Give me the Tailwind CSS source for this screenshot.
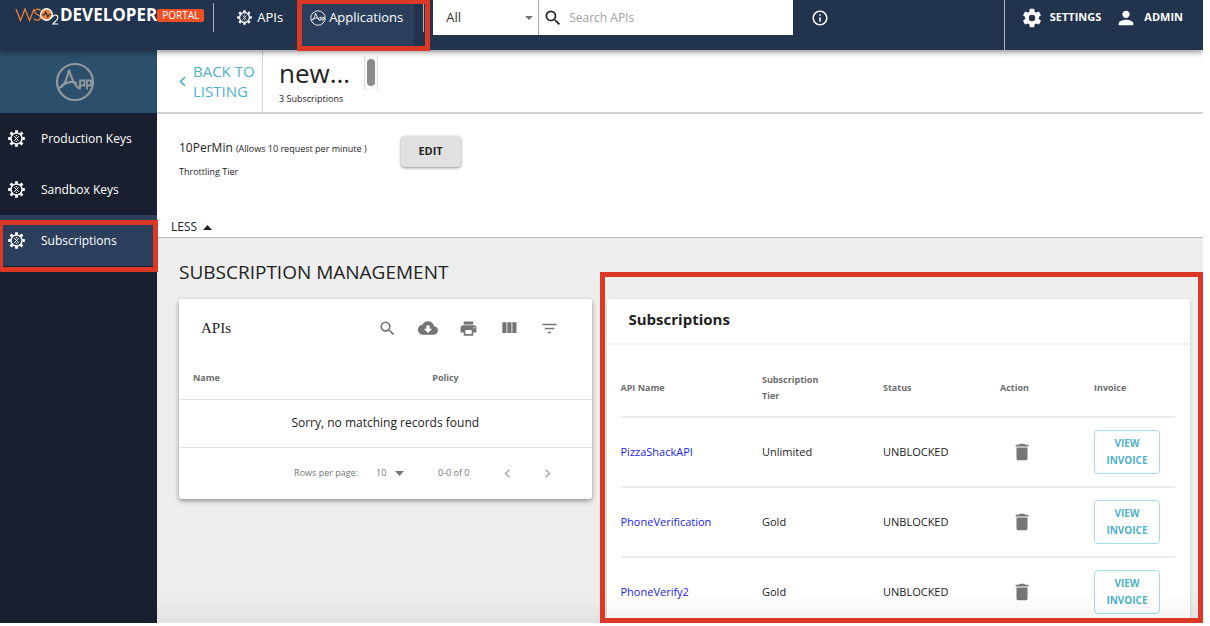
<!DOCTYPE html>
<html lang="en">
<head>
<meta charset="utf-8">
<title>WSO2 Developer Portal - Subscriptions</title>
<script src="https://cdn.jsdelivr.net/npm/@tailwindcss/browser@4"></script>
</head>
<body class="relative h-screen overflow-hidden bg-white pr-[7px] pb-[3px] font-['Open_Sans',sans-serif] text-[#222]">
<svg class="hidden" aria-hidden="true">
  <symbol id="gear" viewBox="0 0 24 24">
    <g fill="none" stroke="currentColor" stroke-width="2">
      <circle cx="12" cy="12" r="7.8"/>
      <path stroke-width="4" d="M12 .3v3.500M12 20.200v3.500M.3 12h3.500M20.200 12h3.500M3.600 3.600l2.500 2.500M17.900 17.900l2.500 2.500M3.600 20.400l2.500-2.500M17.900 6.100l2.500-2.500"/>
      <path stroke-width="1.400" d="M8.800 8.800l6.400 6.400M15.200 8.800l-6.400 6.400M11 8h2M11 16h2"/>
    </g>
  </symbol>
  <symbol id="app" viewBox="0 0 40 40">
    <g fill="none" stroke="currentColor" stroke-width="2.200">
      <circle cx="20" cy="20" r="18"/>
      <path d="M3 26Q10 26 14 8q4 14 10 18.500M6 24q8-5 12-4l4 1"/>
      <path stroke-width="1.800" d="M25 17.500v10M25 18.500h4.500v5H25M32 17.500v10M32 18.500h4v5h-4"/>
    </g>
  </symbol>
  <symbol id="search" viewBox="0 0 24 24"><path fill="currentColor" d="M15.500 14h-.79l-.28-.27A6.471 6.471 0 0 0 16 9.500 6.500 6.500 0 1 0 9.500 16c1.610 0 3.090-.59 4.230-1.570l.27.28v.79l5 4.990L20.490 19l-4.990-5zm-6 0C7.010 14 5 11.990 5 9.500S7.010 5 9.500 5 14 7.010 14 9.500 11.990 14 9.500 14z"/></symbol>
  <symbol id="trash" viewBox="0 0 24 24"><path fill="currentColor" d="M6 19c0 1.100.9 2 2 2h8c1.100 0 2-.9 2-2V7H6v12zM19 4h-3.500l-1-1h-5l-1 1H5v2h14V4z"/></symbol>
</svg>

<div class="flex h-full flex-col overflow-hidden">
  <header class="relative z-10 flex h-[50px] shrink-0 items-start bg-[#22334d] text-white shadow-[0_2px_6px_rgba(0,0,0,0.45)]">
    <a href="#" class="flex h-[30px] items-center pl-[15px]" aria-label="WSO2 Developer Portal">
      <svg class="h-[30px] w-[45px]" viewBox="0 0 45 30" fill="none">
        <path stroke="#e8833a" stroke-width="1.300" d="M1 9l4.500 11.500L10 9l4.500 11.500L19 9M25.500 10.500C23.500 8.500 19.500 9 19.500 11.800c0 3.200 6 2.400 6 5.700 0 3-4.500 3.500-6.700 1.300"/>
        <circle cx="31.500" cy="14.500" r="5.800" fill="#f07f2e" stroke="#fff" stroke-width="1.400"/>
        <path stroke="#22334d" stroke-width="1.200" d="M26.500 15h2.500l1.800-3 2 5 1.500-2.500h2"/>
        <path stroke="#fff" stroke-width="1.100" d="M37.800 17.500c0-3.400 5-3.200 5 0 0 2.300-3 4.300-5 6.500h5.500"/>
      </svg>
      <span class="text-[17px] font-bold leading-[30px]">DEVELOPER</span>
      <span class="flex h-[13px] items-center rounded-[2px] bg-[#f04e23] px-[5px] text-[10px]">PORTAL</span>
    </a>
    <span class="mt-[3px] ml-[9px] h-[29px] w-px bg-[#aab3c0]"></span>
    <nav class="flex h-[50px] text-[13px] font-medium">
      <a href="#" class="flex h-[35px] items-center gap-[5px] pr-[15px] pl-[23px]"><svg class="size-[15px]"><use href="#gear"/></svg>APIs</a>
      <a href="#" class="flex h-[50px] items-start bg-[#2b3f5d] pr-[11px] pl-[12px]"><span class="flex h-[35px] items-center gap-[3px]"><svg class="size-4"><use href="#app"/></svg>Applications</span></a>
    </nav>
    <span class="mt-[3px] ml-[9px] h-[29px] w-px bg-[#aab3c0]"></span>
    <form class="ml-[9px] flex h-[35px] bg-white text-[13px] text-[#333]">
      <div class="relative flex w-[106px] items-center border-r border-[#aaa]">
        <select aria-label="Search scope" class="h-full w-full appearance-none bg-transparent pl-[13px]"><option>All</option></select>
        <svg class="pointer-events-none absolute right-[5px] h-[4px] w-[8px]" viewBox="0 0 8 4"><path fill="#757575" d="M0 0h8L4 4z"/></svg>
      </div>
      <label class="flex w-[254px] items-center pl-[4px]" for="q"><svg class="size-[20px] text-[#222]"><use href="#search"/></svg>
        <input id="q" type="search" placeholder="Search APIs" class="ml-[6px] w-[200px] bg-transparent text-[12px] outline-none placeholder:text-[#a2a2a2]"></label>
    </form>
    <button class="ml-[18px] flex h-[35px] items-center" aria-label="Information"><svg class="size-[18px]" viewBox="0 0 24 24" fill="#fff"><path d="M11 17h2v-6h-2v6zm1-15C6.480 2 2 6.480 2 12s4.480 10 10 10 10-4.480 10-10S17.520 2 12 2zm0 18c-4.410 0-8-3.590-8-8s3.590-8 8-8 8 3.590 8 8-3.590 8-8 8zM11 9h2V7h-2v2z"/></svg></button>
    <div class="ml-auto flex h-[50px] border-l border-[#aab3c0] pr-5 pl-4 text-[11px] font-bold">
      <a href="#" class="flex h-[35px] items-center gap-[7px]"><svg class="size-[22px]" viewBox="0 0 24 24" fill="currentColor"><path d="M19.430 12.980c.04-.32.07-.64.07-.98s-.03-.66-.07-.98l2.110-1.650c.19-.15.24-.42.12-.64l-2-3.460c-.12-.22-.39-.3-.61-.22l-2.490 1c-.52-.4-1.080-.73-1.690-.98l-.38-2.650A.488.488 0 0 0 14 2h-4c-.25 0-.46.18-.49.42l-.38 2.650c-.61.25-1.170.59-1.690.98l-2.490-1c-.23-.09-.49 0-.61.22l-2 3.460c-.13.22-.07.49.12.64l2.110 1.650c-.04.32-.07.65-.07.98s.03.66.07.98l-2.110 1.650c-.19.15-.24.42-.12.64l2 3.460c.12.22.39.3.61.22l2.490-1c.52.4 1.080.73 1.690.98l.38 2.650c.03.24.24.42.49.42h4c.25 0 .46-.18.49-.42l.38-2.650c.61-.25 1.170-.59 1.690-.98l2.490 1c.23.09.49 0 .61-.22l2-3.460c.12-.22.07-.49-.12-.64l-2.110-1.650zM12 15.500a3.500 3.500 0 1 1 0-7 3.500 3.500 0 0 1 0 7z"/></svg>SETTINGS</a>
      <a href="#" class="ml-[14px] flex h-[35px] items-center gap-[7px]"><svg class="size-[22px]" viewBox="0 0 24 24" fill="currentColor"><path d="M12 12c2.210 0 4-1.790 4-4s-1.790-4-4-4-4 1.790-4 4 1.790 4 4 4zm0 2c-2.670 0-8 1.340-8 4v2h16v-2c0-2.660-5.330-4-8-4z"/></svg>ADMIN</a>
    </div>
  </header>

  <div class="flex min-h-0 flex-1">
    <aside class="w-[157px] shrink-0 bg-[#1a1f2f] text-[12px] font-medium text-white">
      <div class="flex h-[63px] items-center justify-center bg-[#2c4f6b] text-[#9298a0]">
        <svg class="mr-[7px] size-[40px]" viewBox="0 0 40 40"><use href="#app"/></svg>
      </div>
      <nav>
        <a href="#" class="flex h-[51px] items-center gap-4 pl-2"><svg class="size-[17px]"><use href="#gear"/></svg>Production Keys</a>
        <a href="#" class="flex h-[51px] items-center gap-4 pl-2"><svg class="size-[17px]"><use href="#gear"/></svg>Sandbox Keys</a>
        <a href="#" aria-current="page" class="flex h-[51px] items-center gap-4 bg-[#2b3f5d] pl-2"><svg class="size-[17px]"><use href="#gear"/></svg>Subscriptions</a>
      </nav>
    </aside>

    <main class="flex min-w-0 flex-1 flex-col bg-[#eee]">
      <div class="flex h-[64px] shrink-0 border-b-2 border-[#d2d4d4] bg-white">
        <a href="#" class="flex w-[106px] items-center gap-[7px] border-r border-[#d2d2d2] pl-[22px] text-[15px] leading-5 text-[#4fb1ca]">
          <svg class="h-[11px] w-[7px] shrink-0" viewBox="0 0 7 11" fill="none" stroke="currentColor" stroke-width="1.700"><path d="M6 1L1.500 5.500 6 10"/></svg>
          <span>BACK TO LISTING</span>
        </a>
        <div class="pt-1 pl-4">
          <h1 class="text-[26px] leading-[38px]">new...</h1>
          <p class="text-[9px] leading-[14px]">3 Subscriptions</p>
        </div>
        <div class="mt-[6px] ml-[14px] flex h-[34px] w-[14px] justify-center border-x border-[#ddd] bg-[#fafafa] pt-[3px]"><span class="h-[27px] w-[8px] rounded-full bg-[#8b8b8b]"></span></div>
      </div>

      <section class="flex h-[124px] shrink-0 flex-col border-b border-[#b8b8b8] bg-white">
        <div class="flex gap-[34px] pt-[22px] pl-[22px]">
          <div>
            <p class="text-[12px] leading-[23px]">10PerMin <span class="text-[9px]">(Allows 10 request per minute )</span></p>
            <p class="text-[9px] leading-[23px]">Throttling Tier</p>
          </div>
          <button class="h-[31px] w-[60px] rounded-[4px] bg-[#e0e0e0] text-[11px] font-bold shadow-[0_1px_3px_rgba(0,0,0,0.45)]">EDIT</button>
        </div>
        <button class="mt-auto flex h-[20px] items-center gap-[6px] self-start pl-[14px] text-[12px]">LESS <svg class="h-[5px] w-[9px]" viewBox="0 0 9 5"><path fill="#222" d="M0 5h9L4.500 0z"/></svg></button>
      </section>

      <section class="min-h-0 flex-1 pr-[13px] pl-[22px]">
        <h2 class="pt-5 text-[19px] leading-[28px]">SUBSCRIPTION MANAGEMENT</h2>
        <div class="mt-[13px] grid grid-cols-12 items-start gap-[15px]">
          <div class="col-span-5 rounded-[3px] bg-white shadow-[0_2px_5px_rgba(0,0,0,0.4)]">
            <div class="flex h-[58px] items-center pr-[33px] pl-[22px]">
              <h3 class="font-['Liberation_Serif',serif] text-[15px] font-medium">APIs</h3>
              <div class="ml-auto flex gap-[21px] text-[#757575]">
                <button aria-label="Search"><svg class="size-[19px]"><use href="#search"/></svg></button>
                <button aria-label="Download CSV"><svg class="size-[20px]" viewBox="0 0 24 24" fill="currentColor"><path d="M19.350 10.040C18.670 6.590 15.640 4 12 4 9.110 4 6.600 5.640 5.350 8.040 2.340 8.360 0 10.910 0 14c0 3.310 2.690 6 6 6h13c2.760 0 5-2.240 5-5 0-2.640-2.050-4.780-4.650-4.960zM17 13l-5 5-5-5h3V9h4v4h3z"/></svg></button>
                <button aria-label="Print"><svg class="size-[19px]" viewBox="0 0 24 24" fill="currentColor"><path d="M19 8H5c-1.660 0-3 1.340-3 3v6h4v4h12v-4h4v-6c0-1.660-1.340-3-3-3zm-3 11H8v-5h8v5zm3-7c-.55 0-1-.45-1-1s.45-1 1-1 1 .45 1 1-.45 1-1 1zm-1-9H6v4h12V3z"/></svg></button>
                <button aria-label="View columns"><svg class="size-[20px]" viewBox="0 0 24 24" fill="currentColor"><path d="M10 18h5V5h-5v13zm-6 0h5V5H4v13zM16 5v13h5V5h-5z"/></svg></button>
                <button aria-label="Filter table"><svg class="size-[19px]" viewBox="0 0 24 24" fill="currentColor"><path d="M10 18h4v-2h-4v2zM3 6v2h18V6H3zm3 7h12v-2H6v2z"/></svg></button>
              </div>
            </div>
            <table class="w-full table-fixed">
              <thead><tr class="h-[42px] border-b border-[#e0e0e0] text-left text-[9px] text-[#6d6d6d]"><th class="w-[58%] pl-[14px] font-bold">Name</th><th class="pl-[14px] font-bold">Policy</th></tr></thead>
              <tbody><tr class="h-[48px] border-b border-[#e0e0e0]"><td colspan="2" class="text-center text-[12px]">Sorry, no matching records found</td></tr></tbody>
            </table>
            <div class="flex h-[51px] items-center justify-end pr-[41px] text-[9px] text-[#757575]">
              <label for="rows">Rows per page:</label>
              <div class="relative ml-[18px] flex items-center"><select id="rows" class="w-[28px] appearance-none"><option>10</option></select><svg class="pointer-events-none absolute right-0 h-[5px] w-[9px]" viewBox="0 0 9 5"><path fill="#757575" d="M0 0h9L4.500 5z"/></svg></div>
              <span class="ml-[34px]">0-0 of 0</span>
              <button aria-label="Previous page" class="ml-[34px]"><svg class="h-[9px] w-[7px]" viewBox="0 0 7 9" fill="none" stroke="#a5a5a5" stroke-width="1.400"><path d="M5.500 .8L1.500 4.500l4 3.700"/></svg></button>
              <button aria-label="Next page" class="ml-[33px]"><svg class="h-[9px] w-[7px]" viewBox="0 0 7 9" fill="none" stroke="#a5a5a5" stroke-width="1.400"><path d="M1.500 .8l4 3.700-4 3.700"/></svg></button>
            </div>
          </div>

          <div class="col-span-7 rounded-[3px] bg-white shadow-[0_1px_3px_rgba(0,0,0,0.2)]">
            <h3 class="flex h-[46px] items-center border-b-2 border-[#efefef] pb-1 pl-[22px] text-[15px] font-bold">Subscriptions</h3>
            <div class="pr-[15px] pl-[14px]">
              <table class="w-full table-fixed text-left">
                <colgroup><col><col class="w-[121px]"><col class="w-[117px]"><col class="w-[94px]"><col class="w-[81px]"></colgroup>
                <thead><tr class="h-[72px] border-b-2 border-[#ebebeb] text-[9px] leading-4 text-[#6d6d6d]"><th class="pt-[14px] font-bold">API Name</th><th class="pt-[14px] pr-12 font-bold">Subscription Tier</th><th class="pt-[14px] font-bold">Status</th><th class="pt-[14px] font-bold">Action</th><th class="pt-[14px] font-bold">Invoice</th></tr></thead>
                <tbody class="text-[11px]">
                  <tr class="h-[70px] border-b-2 border-[#ebebeb]"><td><a href="#" class="text-[#1a25ee]">PizzaShackAPI</a></td><td>Unlimited</td><td>UNBLOCKED</td><td><button aria-label="Delete PizzaShackAPI" class="ml-[11px] block text-[#757575]"><svg class="size-[22px]"><use href="#trash"/></svg></button></td><td><button class="block h-[44px] w-[66px] rounded-[4px] border border-[#a5dbe7] text-[10px] leading-[17px] font-bold text-[#4fb1ca]">VIEW INVOICE</button></td></tr>
                  <tr class="h-[70px] border-b-2 border-[#ebebeb]"><td><a href="#" class="text-[#1a25ee]">PhoneVerification</a></td><td>Gold</td><td>UNBLOCKED</td><td><button aria-label="Delete PhoneVerification" class="ml-[11px] block text-[#757575]"><svg class="size-[22px]"><use href="#trash"/></svg></button></td><td><button class="block h-[44px] w-[66px] rounded-[4px] border border-[#a5dbe7] text-[10px] leading-[17px] font-bold text-[#4fb1ca]">VIEW INVOICE</button></td></tr>
                  <tr class="h-[70px] border-b-2 border-[#ebebeb]"><td><a href="#" class="text-[#1a25ee]">PhoneVerify2</a></td><td>Gold</td><td>UNBLOCKED</td><td><button aria-label="Delete PhoneVerify2" class="ml-[11px] block text-[#757575]"><svg class="size-[22px]"><use href="#trash"/></svg></button></td><td><button class="block h-[44px] w-[66px] rounded-[4px] border border-[#a5dbe7] text-[10px] leading-[17px] font-bold text-[#4fb1ca]">VIEW INVOICE</button></td></tr>
                </tbody>
              </table>
            </div>
          </div>
        </div>
      </section>
    </main>
  </div>
</div>

<!-- Soft shade along the lower edge -->
<div class="pointer-events-none absolute right-[7px] bottom-[3px] left-[157px] h-[30px] bg-linear-to-b from-black/0 to-black/5"></div>
<!-- Callout frames -->
<div class="pointer-events-none absolute top-[-1px] left-[297px] z-20 h-[52px] w-[133px] border-[5px] border-[#dc3826]"></div>
<div class="pointer-events-none absolute top-[220px] left-0 z-20 h-[52px] w-[158px] border-[5px] border-l-[3px] border-[#dc3826]"></div>
<div class="pointer-events-none absolute top-[272px] right-[7px] bottom-[3px] left-[600px] z-20 border-[5px] border-[#dc3826]"></div>
</body>
</html>
